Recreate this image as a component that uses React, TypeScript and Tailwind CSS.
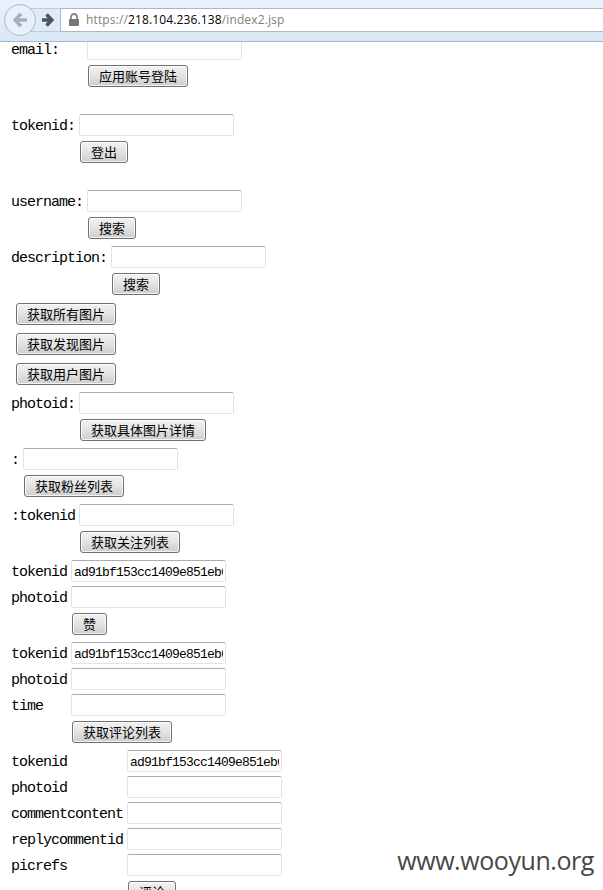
type Row = { label?: string; value?: string; button?: string };
type Form = { indent: string; gap: string; rows: Row[] };

const HASH = "ad91bf153cc1409e851eb6";

const forms: Form[] = [
  { indent: "w-[76px]", gap: "", rows: [{ label: "email:" }, { button: "应用账号登陆" }] },
  { indent: "w-[68px]", gap: "mt-[27px]", rows: [{ label: "tokenid:" }, { button: "登出" }] },
  { indent: "w-[76px]", gap: "mt-[27px]", rows: [{ label: "username:" }, { button: "搜索" }] },
  { indent: "w-[100px]", gap: "mt-[7px]", rows: [{ label: "description:" }, { button: "搜索" }] },
  { indent: "w-1", gap: "mt-[3px]", rows: [{ button: "获取所有图片" }] },
  { indent: "w-1", gap: "mt-[3px]", rows: [{ button: "获取发现图片" }] },
  { indent: "w-1", gap: "mt-[3px]", rows: [{ button: "获取用户图片" }] },
  { indent: "w-[68px]", gap: "mt-[7px]", rows: [{ label: "photoid:" }, { button: "获取具体图片详情" }] },
  { indent: "w-3", gap: "mt-[7px]", rows: [{ label: ":" }, { button: "获取粉丝列表" }] },
  { indent: "w-[68px]", gap: "mt-[7px]", rows: [{ label: ":tokenid" }, { button: "获取关注列表" }] },
  {
    indent: "w-[60px]",
    gap: "mt-[7px]",
    rows: [{ label: "tokenid", value: HASH }, { label: "photoid" }, { button: "赞" }],
  },
  {
    indent: "w-[60px]",
    gap: "mt-[7px]",
    rows: [{ label: "tokenid", value: HASH }, { label: "photoid" }, { label: "time" }, { button: "获取评论列表" }],
  },
  {
    indent: "w-[116px]",
    gap: "mt-[7px]",
    rows: [
      { label: "tokenid", value: HASH },
      { label: "photoid" },
      { label: "commentcontent" },
      { label: "replycommentid" },
      { label: "picrefs" },
      { button: "评论" },
    ],
  },
];

function FormRow({ row, indent, first }: { row: Row; indent: string; first: boolean }) {
  if (row.button) {
    return (
      <div className="flex pt-[5px]">
        <div className={`${indent} shrink-0`} />
        <button
          type="button"
          className="ml-px h-[22px] shrink-0 whitespace-nowrap rounded-[3px] border border-[#707070] bg-linear-to-b from-[#f2f2f2] from-0% via-[#e3e3e3] via-50% to-[#cdcdcd] px-[10px] font-['Noto_Sans_CJK_SC',sans-serif] text-[13px] leading-5 text-black shadow-[inset_0_0_0_1px_rgba(255,255,255,0.75)]"
        >
          {row.button}
        </button>
      </div>
    );
  }
  return (
    <div className={`flex h-[22px] items-center ${first ? "" : "mt-1"}`}>
      <label
        className={`${indent} shrink-0 whitespace-nowrap pt-[3px] font-['Liberation_Mono',monospace] text-[15px] leading-5 tracking-[-1px] text-black`}
      >
        {row.label}
      </label>
      <input
        readOnly
        defaultValue={row.value ?? ""}
        className="h-[22px] w-[155px] rounded-[2px] border border-[#e2e3ea] border-t-[#abadb3] bg-white px-[2px] pt-[3px] font-['Liberation_Mono',monospace] text-[13px] leading-4 tracking-[-0.8px] text-black outline-none"
      />
    </div>
  );
}

function Toolbar() {
  return (
    <header className="flex h-[42px] items-start border-b border-[#a9b9cf] bg-linear-to-b from-[#eaf2fb] to-[#d9e7f6]">
      <div className="h-[41px] w-[60px] shrink-0">
        <svg width="60" height="41" viewBox="0 0 60 41" fill="none">
          <path d="M30 8.5H60M30 31.5H60" stroke="#b9cbdd" />
          <rect x="31" y="9" width="29" height="22" fill="#dfebf7" />
          <circle cx="20" cy="20" r="15.4" fill="#e8f1fb" stroke="#b3c4d6" strokeWidth="1.2" />
          <path d="M21 13.8L15.2 20l5.8 6.2M15.5 20H27" stroke="#a8b1bb" strokeWidth="3.6" />
          <path d="M46.5 14.5l5.3 5.5-5.3 5.5M51.5 20H42" stroke="#4b555f" strokeWidth="3.6" />
        </svg>
      </div>
      <div className="mt-2 flex h-6 flex-1 items-center border-y border-l border-[#a8b9cf] bg-white pl-[7px]">
        <svg width="12" height="14" viewBox="0 0 12 14" fill="none">
          <path d="M3 7V4a3 3 0 0 1 6 0v3" stroke="#858585" strokeWidth="1.8" />
          <rect x="1" y="6" width="10" height="7" rx="1" fill="#777" />
        </svg>
        <span className="ml-[6px] whitespace-nowrap font-['Open_Sans',sans-serif] text-[12px] leading-5 tracking-[0.13px] text-[#808080]">
          https://<span className="text-black">218.104.236.138</span>/index2.jsp
        </span>
      </div>
    </header>
  );
}

export default function App() {
  return (
    <div className="relative h-[890px] w-[603px] overflow-hidden bg-white">
      <Toolbar />
      <main className="h-[848px] overflow-hidden">
        <div className="-mt-1 pl-[11px]">
          {forms.map((form, i) => (
            <form key={i} className={form.gap}>
              {form.rows.map((row, j) => (
                <FormRow key={j} row={row} indent={form.indent} first={j === 0} />
              ))}
            </form>
          ))}
        </div>
      </main>
      <div className="absolute right-[9px] bottom-[14px] font-['Open_Sans',sans-serif] text-[25px] leading-8 tracking-[-0.43px] whitespace-nowrap text-[#484848]">
        www.wooyun.org
      </div>
    </div>
  );
}
